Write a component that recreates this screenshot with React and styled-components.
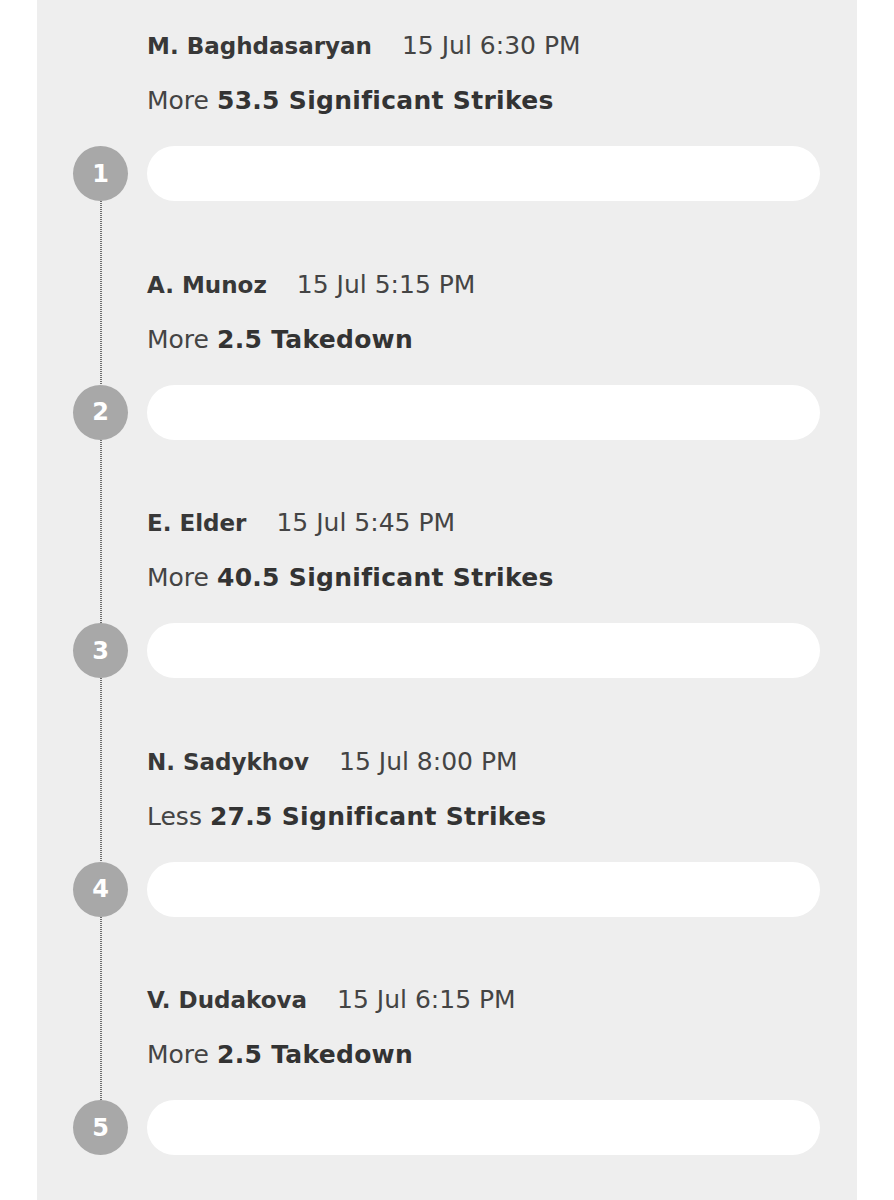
import React from 'react';
import styled, { createGlobalStyle } from 'styled-components';

const GlobalStyle = createGlobalStyle`
  html, body {
    margin: 0;
    padding: 0;
    background: #ffffff;
  }
  body {
    font-family: "DejaVu Sans", "Noto Sans", "Liberation Sans", sans-serif;
    color: #333333;
  }
`;

const Panel = styled.div`
  margin: 0 37px;
  padding: 31px 37px 46px 36px;
  min-height: 1200px;
  box-sizing: border-box;
  background: #eeeeee;
`;

const Item = styled.div`
  display: grid;
  grid-template-columns: 55px 1fr;
  column-gap: 19px;
`;

const Rail = styled.div`
  display: flex;
  justify-content: center;

  &::before {
    content: '';
    width: 2px;
    background: ${p => p.$line
      ? 'repeating-linear-gradient(to bottom, #6e6e6e 0 1px, transparent 1px 2px)'
      : 'none'};
  }
`;

const Info = styled.div`
  padding: ${p => (p.$first ? '0' : '68.5px')} 0 30px;
`;

const Head = styled.div`
  display: flex;
  align-items: baseline;
  gap: 30px;
  height: 30px;
  line-height: 30px;
  font-size: 25px;
`;

const Name = styled.span`
  font-size: 23px;
  font-weight: 700;
  color: #383838;
`;

const Time = styled.span`
  font-weight: 400;
  color: #444444;
`;

const Bet = styled.div`
  margin-top: 25px;
  height: 30px;
  line-height: 30px;
  font-size: 25px;
  color: #444444;

  b {
    font-weight: 700;
    color: #333333;
    letter-spacing: 0.3px;
  }
`;

const Badge = styled.div`
  width: 55px;
  height: 55px;
  border-radius: 50%;
  background: #a8a8a8;
  color: #ffffff;
  font-size: 24px;
  font-weight: 700;
  display: flex;
  align-items: center;
  justify-content: center;
`;

const Pill = styled.div`
  height: 55px;
  border-radius: 28px;
  background: #ffffff;
`;

const picks = [
  { name: 'M. Baghdasaryan', time: '15 Jul 6:30 PM', side: 'More', line: '53.5 Significant Strikes' },
  { name: 'A. Munoz', time: '15 Jul 5:15 PM', side: 'More', line: '2.5 Takedown' },
  { name: 'E. Elder', time: '15 Jul 5:45 PM', side: 'More', line: '40.5 Significant Strikes' },
  { name: 'N. Sadykhov', time: '15 Jul 8:00 PM', side: 'Less', line: '27.5 Significant Strikes' },
  { name: 'V. Dudakova', time: '15 Jul 6:15 PM', side: 'More', line: '2.5 Takedown' },
];

export default function App() {
  return (
    <>
      <GlobalStyle />
      <Panel>
        {picks.map((pick, i) => (
          <Item key={pick.name}>
            <Rail $line={i > 0} />
            <Info $first={i === 0}>
              <Head>
                <Name>{pick.name}</Name>
                <Time>{pick.time}</Time>
              </Head>
              <Bet>
                {pick.side} <b>{pick.line}</b>
              </Bet>
            </Info>
            <Badge>{i + 1}</Badge>
            <Pill />
          </Item>
        ))}
      </Panel>
    </>
  );
}
